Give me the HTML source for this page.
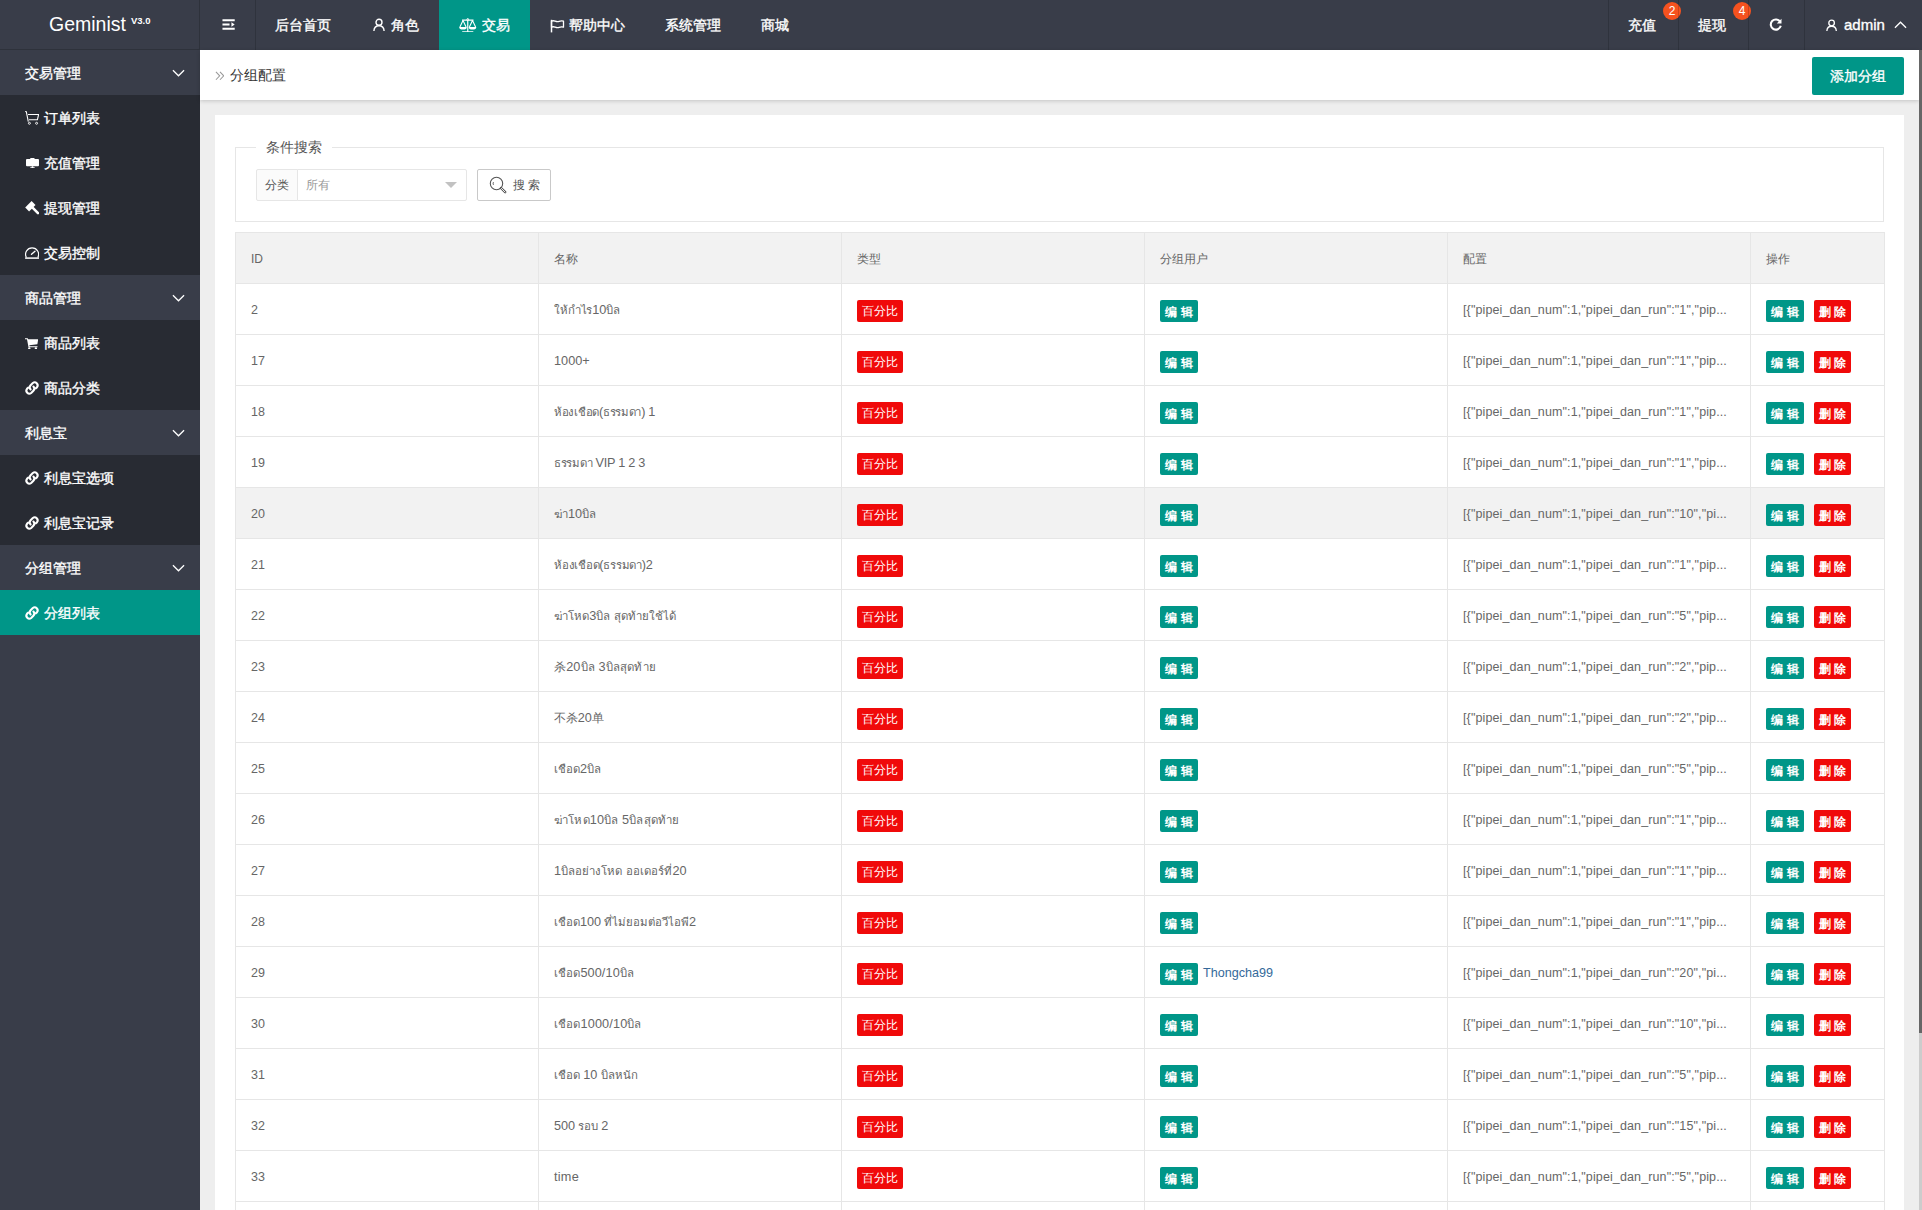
<!DOCTYPE html>
<html lang="zh"><head><meta charset="utf-8"><title>分组配置</title>
<style>
*{box-sizing:border-box;margin:0;padding:0}
html,body{width:1922px;height:1210px;overflow:hidden;background:#eee}
body{font-family:"Liberation Sans",sans-serif;font-size:14px;color:#333;position:relative}
.hdr{position:absolute;left:0;top:0;width:1922px;height:50px;background:#393D49;color:#fff}
.logo{position:absolute;left:0;top:0;width:200px;height:50px;border-right:1px solid rgba(0,0,0,.18);border-bottom:1px solid rgba(0,0,0,.18)}
.logo b{position:absolute;left:49px;top:12px;font-weight:normal;font-size:19.5px;line-height:24px;color:#fff}
.logo sup{position:absolute;left:131px;top:15px;font-size:9.5px;font-weight:bold;line-height:12px}
.tn{position:absolute;top:0;height:50px;line-height:50px;font-size:14px;color:#fff;white-space:nowrap}
.tn.act{background:#009688}
.tn,.g,.c,.addbtn{-webkit-text-stroke:0.35px #fff}
.tn svg{position:absolute}
.vd{position:absolute;top:0;width:1px;height:50px;background:rgba(0,0,0,.16)}
.badge{position:absolute;top:2px;width:18px;height:18px;border-radius:9px;background:#f5521f;color:#fff;font-size:12px;line-height:18px;text-align:center}
.side{position:absolute;left:0;top:50px;width:200px;height:1160px;background:#393D49}
.g{height:45px;line-height:47px;padding-left:25px;color:#fff;font-size:14px;position:relative;background:#393D49}
.g .chev{position:absolute;left:172px;top:18.7px}
.c{height:45px;line-height:47px;padding-left:44px;color:#fff;font-size:14px;position:relative;background:#282B33}
.c.act{background:#009688}
.c .ic{position:absolute;left:24px;top:15px;width:16px;height:16px}
.crumb{position:absolute;left:200px;top:50px;width:1719px;height:50px;background:#fff;box-shadow:0 1px 4px rgba(0,0,0,.18);line-height:50px;font-size:14px;color:#333}
.crumb .t{position:absolute;left:30px;top:0}
.crumb .gg{position:absolute;left:15px;top:21px}
.addbtn{position:absolute;left:1612px;top:7px;width:92px;height:38px;line-height:38px;background:#009688;color:#fff;border-radius:2px;text-align:center;font-size:14px}
.card{position:absolute;left:215px;top:115px;width:1689px;height:1100px;background:#fff}
fieldset{position:absolute;left:20px;top:24px;width:1649px;height:83px;border:1px solid #e6e6e6;}
legend{margin-left:20px;padding:0 10px;font-size:14px;color:#555;line-height:16px;height:16px}
.lab{position:absolute;left:20px;top:14px;width:42px;height:32px;border:1px solid #e6e6e6;background:#fbfbfb;font-size:12px;line-height:31px;text-align:center;color:#555;border-radius:2px 0 0 2px}
.sel{position:absolute;left:61px;top:14px;width:170px;height:32px;border:1px solid #e6e6e6;background:#fff;font-size:12px;line-height:31px;padding-left:8px;color:#999;border-radius:0 2px 2px 0}
.sel i{position:absolute;right:9.5px;top:12px;border:6px solid transparent;border-top-color:#c2c2c2;border-bottom:none;width:0;height:0}
.sbtn{position:absolute;left:241px;top:14px;width:74px;height:32px;border:1px solid #c9c9c9;border-radius:2px;background:#fff;font-size:12px;line-height:31px;color:#555}
.sbtn span{position:absolute;left:35px;top:0}
.sbtn svg{position:absolute;left:11px;top:6px}
table{position:absolute;left:20px;top:117px;width:1649px;border-collapse:collapse;table-layout:fixed;font-size:12.5px;color:#666}
th,td{border:1px solid #e6e6e6;height:51px;padding:2px 15px 0;line-height:20px;text-align:left;font-weight:normal;white-space:nowrap;overflow:hidden;vertical-align:middle}
th{background:#f2f2f2;height:51px;font-size:12px}
tr.hov td{background:#f2f2f2}
.btn{display:inline-block;height:22px;line-height:22px;padding:0 5px;text-align:center;font-size:12px;color:#fff;background:#009688;border-radius:2px;vertical-align:middle;position:relative;top:1px}
.btn.danger{background:#f00a0a}
.btn.pc{width:46px;padding:0}
.btn.ml{margin-left:10px}
.btn.ed{width:38px;padding:0;font-weight:bold;line-height:24px;overflow:hidden}
.btn.de{width:37px;padding:0;font-weight:bold;line-height:24px;overflow:hidden}
.ulink{color:#34699a;margin-left:5px;font-size:12.6px;position:relative;top:1px}
.cfg{letter-spacing:0.12px}
.nm{font-size:12.7px}
.nm .k{font-size:12px}
.sb{position:absolute;left:1919px;top:50px;width:3px;height:1160px;background:#ccc}
.sb i{position:absolute;left:0;top:0;width:3px;height:983px;background:#666}
</style></head><body>
<div class="side">
<div class="g">交易管理<svg class="chev" viewBox="0 0 14 8" width="13" height="8"><path d="M1 1l6 6 6-6" fill="none" stroke="#fff" stroke-width="1.4"/></svg></div>
<div class="c"><svg class="ic" style="left:24.9px;top:15.9px;width:14.2px;height:14px" viewBox="0 0 14.2 14"><g fill="none" stroke="#fff"><path d="M0.2 0.5l1.1 0.2 2 10" stroke-width="1.1"/><path d="M3 3.5h10.6l-1.2 5.3H4" stroke-width="1.1" stroke-linejoin="round"/><circle cx="4.4" cy="12.3" r="1" stroke-width="0.9"/><circle cx="11.6" cy="12.3" r="1" stroke-width="0.9"/></g></svg>订单列表</div>
<div class="c"><svg class="ic" style="left:25.6px;top:17.5px;width:13px;height:10.4px" viewBox="0 0 13 10.4"><path d="M4.3 0h4.2v1.2H4.3z M5.7 8.2h1.6v1.2H5.7z M4.3 9.3h4.4v1.1H4.3z" fill="#fff"/><rect x="0" y="0.9" width="13" height="7.4" rx="1" fill="#fff"/></svg>充值管理</div>
<div class="c"><svg class="ic" style="left:24.9px;top:15.9px;width:14.2px;height:14.2px" viewBox="0 0 14.2 14.2"><path d="M6.6 0.1l3.9 3.9-6.4 6.4-3.9-3.9z" fill="#fff"/><path d="M6.8 5.8l6.2 6.4" stroke="#fff" stroke-width="2.6" stroke-linecap="round"/></svg>提现管理</div>
<div class="c"><svg class="ic" style="left:24.9px;top:17.2px;width:14.2px;height:12px" viewBox="0 0 14.2 12"><path d="M1.4 10.5A6.5 6.5 0 1 1 12.8 10.5" fill="none" stroke="#fff" stroke-width="1.2"/><path d="M0.1 11.1h14" stroke="#fff" stroke-width="1.5"/><path d="M6.5 7.2l3.5-3" stroke="#fff" stroke-width="1.4" stroke-linecap="round"/></svg>交易控制</div>
<div class="g">商品管理<svg class="chev" viewBox="0 0 14 8" width="13" height="8"><path d="M1 1l6 6 6-6" fill="none" stroke="#fff" stroke-width="1.4"/></svg></div>
<div class="c"><svg class="ic" style="left:24.9px;top:17.6px;width:13.2px;height:11.6px" viewBox="0 0 13.2 11.6"><path d="M0 0.2h2.7l0.5 1h10l-0.8 5.1-8 0.9 0.2 1h7.9v1.1H3.5L2 1.2H0z" fill="#fff"/><circle cx="4.3" cy="10.4" r="1.2" fill="#fff"/><circle cx="10.9" cy="10.4" r="1.2" fill="#fff"/></svg>商品列表</div>
<div class="c"><svg class="ic" viewBox="0 0 16 16" width="15" height="15"><g fill="none" stroke="#fff" stroke-width="2.1" stroke-linecap="round"><path d="M6.6 9.4a3 3 0 0 1 0-4.2l2.2-2.2a3 3 0 0 1 4.2 4.2l-1.1 1.1"/><path d="M9.4 6.6a3 3 0 0 1 0 4.2l-2.2 2.2a3 3 0 0 1-4.2-4.2l1.1-1.1"/></g></svg>商品分类</div>
<div class="g">利息宝<svg class="chev" viewBox="0 0 14 8" width="13" height="8"><path d="M1 1l6 6 6-6" fill="none" stroke="#fff" stroke-width="1.4"/></svg></div>
<div class="c"><svg class="ic" viewBox="0 0 16 16" width="15" height="15"><g fill="none" stroke="#fff" stroke-width="2.1" stroke-linecap="round"><path d="M6.6 9.4a3 3 0 0 1 0-4.2l2.2-2.2a3 3 0 0 1 4.2 4.2l-1.1 1.1"/><path d="M9.4 6.6a3 3 0 0 1 0 4.2l-2.2 2.2a3 3 0 0 1-4.2-4.2l1.1-1.1"/></g></svg>利息宝选项</div>
<div class="c"><svg class="ic" viewBox="0 0 16 16" width="15" height="15"><g fill="none" stroke="#fff" stroke-width="2.1" stroke-linecap="round"><path d="M6.6 9.4a3 3 0 0 1 0-4.2l2.2-2.2a3 3 0 0 1 4.2 4.2l-1.1 1.1"/><path d="M9.4 6.6a3 3 0 0 1 0 4.2l-2.2 2.2a3 3 0 0 1-4.2-4.2l1.1-1.1"/></g></svg>利息宝记录</div>
<div class="g">分组管理<svg class="chev" viewBox="0 0 14 8" width="13" height="8"><path d="M1 1l6 6 6-6" fill="none" stroke="#fff" stroke-width="1.4"/></svg></div>
<div class="c act"><svg class="ic" viewBox="0 0 16 16" width="15" height="15"><g fill="none" stroke="#fff" stroke-width="2.1" stroke-linecap="round"><path d="M6.6 9.4a3 3 0 0 1 0-4.2l2.2-2.2a3 3 0 0 1 4.2 4.2l-1.1 1.1"/><path d="M9.4 6.6a3 3 0 0 1 0 4.2l-2.2 2.2a3 3 0 0 1-4.2-4.2l1.1-1.1"/></g></svg>分组列表</div>
</div>
<div class="hdr">
<div class="logo"><b>Geminist</b><sup>V3.0</sup></div>
<div class="tn" style="left:200px;width:55px"><svg style="left:21.8px;top:18px" width="13.2" height="13" viewBox="0 0 14 13"><path d="M0.5 1h13v2h-13z M0.5 5.5h7.5v2h-7.5z M0.5 10h13v2h-13z M10 4l3.5 2.5L10 9z" fill="#fff"/></svg></div>
<div class="vd" style="left:255px"></div>
<div class="tn" style="left:275px">后台首页</div>
<div class="tn" style="left:372px;padding-left:19px"><svg style="left:1px;top:18px" width="12" height="14" viewBox="0 0 12 14"><circle cx="6" cy="4.3" r="3" fill="none" stroke="#fff" stroke-width="1.4"/><path d="M0.9 13c0.2-3.2 2.2-5.2 5.1-5.2s4.9 2 5.1 5.2" fill="none" stroke="#fff" stroke-width="1.4"/></svg>角色</div>
<div class="tn act" style="left:439px;width:91px;padding-left:43px"><svg style="left:20px;top:17.5px" width="17.5" height="14.5" viewBox="0 0 17.5 14.5"><g fill="none" stroke="#fff" stroke-width="1.2"><path d="M3 2.1h11.5M8.75 2.6v11M3.2 13.8h11.1"/><path d="M0.9 8.9l3.1-6.4 3.1 6.4M10.4 8.9l3.1-6.4 3.1 6.4" stroke-width="1.1" stroke-linejoin="round"/><circle cx="8.75" cy="1.5" r="0.9" stroke-width="1"/></g><path d="M0.2 8.9h7.6a3.8 2.6 0 0 1-7.6 0zM9.7 8.9h7.6a3.8 2.6 0 0 1-7.6 0z" fill="#fff"/></svg>交易</div>
<div class="tn" style="left:550px;padding-left:19.3px"><svg style="left:0;top:19px" width="15" height="14" viewBox="0 0 15 14"><path d="M1.5 0.8v12.6" stroke="#fff" stroke-width="1.5" fill="none"/><path d="M1.5 2.2c2.5-1.6 4.2 1 6.4 0.4s3.6-1.4 5.6-0.4v6c-2-1-3.4-0.2-5.6 0.4s-3.9-2-6.4-0.4z" fill="none" stroke="#fff" stroke-width="1.3" stroke-linejoin="round"/></svg>帮助中心</div>
<div class="tn" style="left:665px">系统管理</div>
<div class="tn" style="left:761px">商城</div>
<div class="vd" style="left:1608px"></div>
<div class="tn" style="left:1628px">充值</div><div class="badge" style="left:1663px">2</div>
<div class="vd" style="left:1678px"></div>
<div class="tn" style="left:1698px">提现</div><div class="badge" style="left:1733px">4</div>
<div class="vd" style="left:1748px"></div>
<div class="tn" style="left:1768px;width:16px"><svg style="left:1.3px;top:18.2px" width="13.6" height="13.6" viewBox="0 0 15 15"><path d="M12.3 4.2A5.6 5.6 0 1 0 13 8.6" fill="none" stroke="#fff" stroke-width="2.3"/><path d="M13.8 0.8v5.2H8.6z" fill="#fff"/></svg></div>
<div class="vd" style="left:1804px"></div>
<div class="tn" style="left:1825px;padding-left:19px;font-size:15px"><svg style="left:1.3px;top:18.6px" width="11.2" height="13" viewBox="0 0 12 14"><circle cx="6" cy="4.3" r="3" fill="none" stroke="#fff" stroke-width="1.4"/><path d="M0.9 13c0.2-3.2 2.2-5.2 5.1-5.2s4.9 2 5.1 5.2" fill="none" stroke="#fff" stroke-width="1.4"/></svg>admin<svg style="left:68.5px;top:20.8px" width="13" height="8" viewBox="0 0 14 8"><path d="M1 7l6-6 6 6" fill="none" stroke="#fff" stroke-width="1.4"/></svg></div>
</div>
<div class="crumb"><svg class="gg" width="9.4" height="9.6" viewBox="0 0 10 10"><path d="M1 0.8l4 4.2-4 4.2M5.3 0.8l4 4.2-4 4.2" fill="none" stroke="#999" stroke-width="1.1"/></svg><span class="t">分组配置</span><div class="addbtn">添加分组</div></div>
<div class="card">
<fieldset><legend>条件搜索</legend>
<div class="lab">分类</div><div class="sel">所有<i></i></div>
<div class="sbtn"><svg width="18" height="18" viewBox="0 0 18 18"><circle cx="7.5" cy="7.5" r="6.2" fill="none" stroke="#555" stroke-width="1.1"/><path d="M4.4 6.2a3.4 3.4 0 0 0 0 2.6" fill="none" stroke="#555" stroke-width="1"/><path d="M12 12l4.2 4.2" stroke="#555" stroke-width="2.4" stroke-linecap="round"/><path d="M12.4 12.4l3.6 3.6" stroke="#fff" stroke-width="0.9" stroke-linecap="round"/></svg><span>搜 索</span></div>
</fieldset>
<table><colgroup><col style="width:303px"><col style="width:303px"><col style="width:303px"><col style="width:303px"><col style="width:303px"><col style="width:134px"></colgroup>
<tr><th>ID</th><th>名称</th><th>类型</th><th>分组用户</th><th>配置</th><th>操作</th></tr>
<tr><td>2</td><td><span class="nm" style="letter-spacing:-0.142px"><span class="t" style="font-size:11.4px">ให้กำไร</span>10<span class="t" style="font-size:11.4px">บิล</span></span></td><td><span class="btn xs danger pc">百分比</span></td><td><span class="btn xs ed">编 辑</span></td><td><span class="cfg">[{&quot;pipei_dan_num&quot;:1,&quot;pipei_dan_run&quot;:&quot;1&quot;,&quot;pip...</span></td><td><span class="btn xs ed">编 辑</span><span class="btn xs danger ml de">删 除</span></td></tr>
<tr><td>17</td><td><span class="nm" style="letter-spacing:0.032px">1000+</span></td><td><span class="btn xs danger pc">百分比</span></td><td><span class="btn xs ed">编 辑</span></td><td><span class="cfg">[{&quot;pipei_dan_num&quot;:1,&quot;pipei_dan_run&quot;:&quot;1&quot;,&quot;pip...</span></td><td><span class="btn xs ed">编 辑</span><span class="btn xs danger ml de">删 除</span></td></tr>
<tr><td>18</td><td><span class="nm" style="letter-spacing:-0.291px"><span class="t" style="font-size:11.4px">ห้องเชือด</span>(<span class="t" style="font-size:11.4px">ธรรมดา</span>) 1</span></td><td><span class="btn xs danger pc">百分比</span></td><td><span class="btn xs ed">编 辑</span></td><td><span class="cfg">[{&quot;pipei_dan_num&quot;:1,&quot;pipei_dan_run&quot;:&quot;1&quot;,&quot;pip...</span></td><td><span class="btn xs ed">编 辑</span><span class="btn xs danger ml de">删 除</span></td></tr>
<tr><td>19</td><td><span class="nm" style="letter-spacing:-0.281px"><span class="t" style="font-size:11.4px">ธรรมดา</span> VIP 1 2 3</span></td><td><span class="btn xs danger pc">百分比</span></td><td><span class="btn xs ed">编 辑</span></td><td><span class="cfg">[{&quot;pipei_dan_num&quot;:1,&quot;pipei_dan_run&quot;:&quot;1&quot;,&quot;pip...</span></td><td><span class="btn xs ed">编 辑</span><span class="btn xs danger ml de">删 除</span></td></tr>
<tr class="hov"><td>20</td><td><span class="nm" style="letter-spacing:-0.004px"><span class="t" style="font-size:11.4px">ฆ่า</span>10<span class="t" style="font-size:11.4px">บิล</span></span></td><td><span class="btn xs danger pc">百分比</span></td><td><span class="btn xs ed">编 辑</span></td><td><span class="cfg">[{&quot;pipei_dan_num&quot;:1,&quot;pipei_dan_run&quot;:&quot;10&quot;,&quot;pi...</span></td><td><span class="btn xs ed">编 辑</span><span class="btn xs danger ml de">删 除</span></td></tr>
<tr><td>21</td><td><span class="nm" style="letter-spacing:-0.245px"><span class="t" style="font-size:11.4px">ห้องเชือด</span>(<span class="t" style="font-size:11.4px">ธรรมดา</span>)2</span></td><td><span class="btn xs danger pc">百分比</span></td><td><span class="btn xs ed">编 辑</span></td><td><span class="cfg">[{&quot;pipei_dan_num&quot;:1,&quot;pipei_dan_run&quot;:&quot;1&quot;,&quot;pip...</span></td><td><span class="btn xs ed">编 辑</span><span class="btn xs danger ml de">删 除</span></td></tr>
<tr><td>22</td><td><span class="nm" style="letter-spacing:0.05px"><span class="t" style="font-size:11.4px">ฆ่าโหด</span>3<span class="t" style="font-size:11.4px">บิล</span> <span class="t" style="font-size:11.4px">สุดท้ายใช้ได้</span></span></td><td><span class="btn xs danger pc">百分比</span></td><td><span class="btn xs ed">编 辑</span></td><td><span class="cfg">[{&quot;pipei_dan_num&quot;:1,&quot;pipei_dan_run&quot;:&quot;5&quot;,&quot;pip...</span></td><td><span class="btn xs ed">编 辑</span><span class="btn xs danger ml de">删 除</span></td></tr>
<tr><td>23</td><td><span class="nm" style="letter-spacing:0.156px"><span class="k">杀</span>20<span class="t" style="font-size:11.4px">บิล</span> 3<span class="t" style="font-size:11.4px">บิลสุดท้าย</span></span></td><td><span class="btn xs danger pc">百分比</span></td><td><span class="btn xs ed">编 辑</span></td><td><span class="cfg">[{&quot;pipei_dan_num&quot;:1,&quot;pipei_dan_run&quot;:&quot;2&quot;,&quot;pip...</span></td><td><span class="btn xs ed">编 辑</span><span class="btn xs danger ml de">删 除</span></td></tr>
<tr><td>24</td><td><span class="nm" style="letter-spacing:-0.085px"><span class="k">不杀</span>20<span class="k">单</span></span></td><td><span class="btn xs danger pc">百分比</span></td><td><span class="btn xs ed">编 辑</span></td><td><span class="cfg">[{&quot;pipei_dan_num&quot;:1,&quot;pipei_dan_run&quot;:&quot;2&quot;,&quot;pip...</span></td><td><span class="btn xs ed">编 辑</span><span class="btn xs danger ml de">删 除</span></td></tr>
<tr><td>25</td><td><span class="nm" style="letter-spacing:0.005px"><span class="t" style="font-size:11.4px">เชือด</span>2<span class="t" style="font-size:11.4px">บิล</span></span></td><td><span class="btn xs danger pc">百分比</span></td><td><span class="btn xs ed">编 辑</span></td><td><span class="cfg">[{&quot;pipei_dan_num&quot;:1,&quot;pipei_dan_run&quot;:&quot;5&quot;,&quot;pip...</span></td><td><span class="btn xs ed">编 辑</span><span class="btn xs danger ml de">删 除</span></td></tr>
<tr><td>26</td><td><span class="nm" style="letter-spacing:0.138px"><span class="t" style="font-size:11.4px">ฆ่าโหด</span>10<span class="t" style="font-size:11.4px">บิล</span> 5<span class="t" style="font-size:11.4px">บิลสุดท้าย</span></span></td><td><span class="btn xs danger pc">百分比</span></td><td><span class="btn xs ed">编 辑</span></td><td><span class="cfg">[{&quot;pipei_dan_num&quot;:1,&quot;pipei_dan_run&quot;:&quot;1&quot;,&quot;pip...</span></td><td><span class="btn xs ed">编 辑</span><span class="btn xs danger ml de">删 除</span></td></tr>
<tr><td>27</td><td><span class="nm" style="letter-spacing:0.044px">1<span class="t" style="font-size:11.4px">บิลอย่างโหด</span> <span class="t" style="font-size:11.4px">ออเดอร์ที่</span>20</span></td><td><span class="btn xs danger pc">百分比</span></td><td><span class="btn xs ed">编 辑</span></td><td><span class="cfg">[{&quot;pipei_dan_num&quot;:1,&quot;pipei_dan_run&quot;:&quot;1&quot;,&quot;pip...</span></td><td><span class="btn xs ed">编 辑</span><span class="btn xs danger ml de">删 除</span></td></tr>
<tr><td>28</td><td><span class="nm" style="letter-spacing:-0.032px"><span class="t" style="font-size:11.4px">เชือด</span>100 <span class="t" style="font-size:11.4px">ที่ไม่ยอมต่อวีไอพี</span>2</span></td><td><span class="btn xs danger pc">百分比</span></td><td><span class="btn xs ed">编 辑</span></td><td><span class="cfg">[{&quot;pipei_dan_num&quot;:1,&quot;pipei_dan_run&quot;:&quot;1&quot;,&quot;pip...</span></td><td><span class="btn xs ed">编 辑</span><span class="btn xs danger ml de">删 除</span></td></tr>
<tr><td>29</td><td><span class="nm" style="letter-spacing:0.099px"><span class="t" style="font-size:11.4px">เชือด</span>500/10<span class="t" style="font-size:11.4px">บิล</span></span></td><td><span class="btn xs danger pc">百分比</span></td><td><span class="btn xs ed">编 辑</span><a class="ulink">Thongcha99</a></td><td><span class="cfg">[{&quot;pipei_dan_num&quot;:1,&quot;pipei_dan_run&quot;:&quot;20&quot;,&quot;pi...</span></td><td><span class="btn xs ed">编 辑</span><span class="btn xs danger ml de">删 除</span></td></tr>
<tr><td>30</td><td><span class="nm" style="letter-spacing:0.133px"><span class="t" style="font-size:11.4px">เชือด</span>1000/10<span class="t" style="font-size:11.4px">บิล</span></span></td><td><span class="btn xs danger pc">百分比</span></td><td><span class="btn xs ed">编 辑</span></td><td><span class="cfg">[{&quot;pipei_dan_num&quot;:1,&quot;pipei_dan_run&quot;:&quot;10&quot;,&quot;pi...</span></td><td><span class="btn xs ed">编 辑</span><span class="btn xs danger ml de">删 除</span></td></tr>
<tr><td>31</td><td><span class="nm" style="letter-spacing:-0.036px"><span class="t" style="font-size:11.4px">เชือด</span> 10 <span class="t" style="font-size:11.4px">บิลหนัก</span></span></td><td><span class="btn xs danger pc">百分比</span></td><td><span class="btn xs ed">编 辑</span></td><td><span class="cfg">[{&quot;pipei_dan_num&quot;:1,&quot;pipei_dan_run&quot;:&quot;5&quot;,&quot;pip...</span></td><td><span class="btn xs ed">编 辑</span><span class="btn xs danger ml de">删 除</span></td></tr>
<tr><td>32</td><td><span class="nm" style="letter-spacing:-0.111px">500 <span class="t" style="font-size:11.4px">รอบ</span> 2</span></td><td><span class="btn xs danger pc">百分比</span></td><td><span class="btn xs ed">编 辑</span></td><td><span class="cfg">[{&quot;pipei_dan_num&quot;:1,&quot;pipei_dan_run&quot;:&quot;15&quot;,&quot;pi...</span></td><td><span class="btn xs ed">编 辑</span><span class="btn xs danger ml de">删 除</span></td></tr>
<tr><td>33</td><td><span class="nm" style="letter-spacing:0.258px">time</span></td><td><span class="btn xs danger pc">百分比</span></td><td><span class="btn xs ed">编 辑</span></td><td><span class="cfg">[{&quot;pipei_dan_num&quot;:1,&quot;pipei_dan_run&quot;:&quot;5&quot;,&quot;pip...</span></td><td><span class="btn xs ed">编 辑</span><span class="btn xs danger ml de">删 除</span></td></tr>
<tr><td>34</td><td><span class="nm" style="letter-spacing:0px"></span></td><td><span class="btn xs danger pc">百分比</span></td><td><span class="btn xs ed">编 辑</span></td><td><span class="cfg">[{&quot;pipei_dan_num&quot;:1,&quot;pipei_dan_run&quot;:&quot;1&quot;,&quot;pip...</span></td><td><span class="btn xs ed">编 辑</span><span class="btn xs danger ml de">删 除</span></td></tr>
</table>
</div>
<div class="sb"><i></i></div>
</body></html>
